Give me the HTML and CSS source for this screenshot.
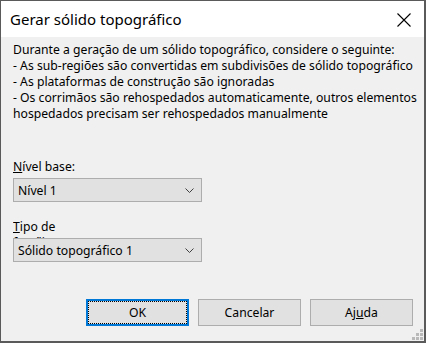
FILE: index.html
```html
<!DOCTYPE html>
<html lang="pt-br">
<head>
  <meta charset="UTF-8" />
  <title>Gerar sólido topográfico</title>
  <link rel="stylesheet" href="styles.css">
</head>
<body>
  <div class="janela">
    <div class="titulo">
      <span class="titulo-texto">Gerar sólido topográfico</span>
      <span class="fechar">
        <svg width="14" height="14" viewBox="0 0 14 14">
          <path d="M0.5 0.5 L13.5 13.5 M13.5 0.5 L0.5 13.5" stroke="#000" stroke-width="1.1" fill="none"/>
        </svg>
      </span>
    </div>

    <div class="conteudo">
      <p class="aviso">Durante a geração de um sólido topográfico, considere o seguinte:<br>
        - As sub-regiões são convertidas em subdivisões de sólido topográfico<br>
        - As plataformas de construção são ignoradas<br>
        - Os corrimãos são rehospedados automaticamente, outros elementos<br>
        hospedados precisam ser rehospedados manualmente</p>

      <label class="rotulo rotulo-nivel"><u>N</u>ível base:</label>
      <div class="combo">
        <span>Nível 1</span>
        <svg class="seta" width="9" height="5" viewBox="0 0 9 5">
          <path d="M0.5 0.5 L4.5 4.5 L8.5 0.5" stroke="#404040" stroke-width="1" fill="none"/>
        </svg>
      </div>

      <label class="rotulo rotulo-tipo"><u>T</u>ipo de família:</label>
      <div class="combo">
        <span>Sólido topográfico 1</span>
        <svg class="seta" width="9" height="5" viewBox="0 0 9 5">
          <path d="M0.5 0.5 L4.5 4.5 L8.5 0.5" stroke="#404040" stroke-width="1" fill="none"/>
        </svg>
      </div>

      <div class="botoes">
        <button class="botao botao-ok"><span class="foco">OK</span></button>
        <button class="botao">Cancelar</button>
        <button class="botao">Aj<u>u</u>da</button>
      </div>
    </div>

    <div class="grip">
      <i style="left:8px;top:0"></i>
      <i style="left:4px;top:4px"></i>
      <i style="left:8px;top:4px"></i>
      <i style="left:0;top:8px"></i>
      <i style="left:4px;top:8px"></i>
      <i style="left:8px;top:8px"></i>
    </div>
  </div>
</body>
</html>
```

FILE: styles.css
```css
html, body {
  margin: 0;
  padding: 0;
}
body {
  width: 426px;
  height: 343px;
  font-family: 'Noto Sans', 'Open Sans', sans-serif;
  font-size: 12.2px;
  color: #000;
  overflow: hidden;
}
.janela {
  position: relative;
  box-sizing: border-box;
  width: 426px;
  height: 343px;
  border-top: 1px solid #5a5a5a;
  border-left: 1px solid #5a5a5a;
  border-right: 2px solid #5a5a5a;
  border-bottom: 2px solid #5a5a5a;
  background: #f0f0f0;
  display: flex;
  flex-direction: column;
}
.titulo {
  height: 36px;
  background: #fff;
  display: flex;
  align-items: center;
  justify-content: space-between;
  padding: 0 13px 0 9px;
}
.titulo-texto {
  font-size: 15px;
  margin-top: -1px;
}
.fechar {
  display: flex;
  margin-top: 1px;
}
.conteudo {
  flex: 1;
  display: flex;
  flex-direction: column;
  padding: 5px 11px 0 12px;
}
.aviso {
  margin: 0 -8px 0 0;
  line-height: 16px;
  white-space: nowrap;
}
.rotulo {
  display: block;
  line-height: 16px;
}
.rotulo-nivel {
  margin-top: 37px;
}
.rotulo-tipo {
  margin-top: 17px;
  width: 60px;
  height: 19px;
  overflow: hidden;
}
.combo {
  box-sizing: border-box;
  width: 189px;
  height: 24px;
  margin-top: 3px;
  background: #e1e1e1;
  border: 1px solid #adadad;
  display: flex;
  align-items: center;
  justify-content: space-between;
  padding: 0 7px 0 4px;
}
.rotulo-tipo + .combo {
  margin-top: 0;
}
.seta {
  display: block;
}
.botoes {
  display: flex;
  justify-content: flex-end;
  gap: 9px;
  margin-top: 37px;
}
.botao {
  box-sizing: border-box;
  width: 103px;
  height: 27px;
  background: #e1e1e1;
  border: 1px solid #adadad;
  font-family: inherit;
  font-size: 12.2px;
  color: #000;
  padding: 0;
  margin: 0;
}
.botao-ok {
  border: 2px solid #0078d7;
  position: relative;
}
.foco {
  position: absolute;
  left: 0;
  top: 0;
  right: 0;
  bottom: 0;
  border: 1px dotted #000;
  display: flex;
  align-items: center;
  justify-content: center;
}
.grip {
  position: absolute;
  right: 1px;
  bottom: 1px;
  width: 11px;
  height: 11px;
}
.grip i {
  position: absolute;
  width: 3px;
  height: 3px;
  background: #b9b9b9;
}
```
